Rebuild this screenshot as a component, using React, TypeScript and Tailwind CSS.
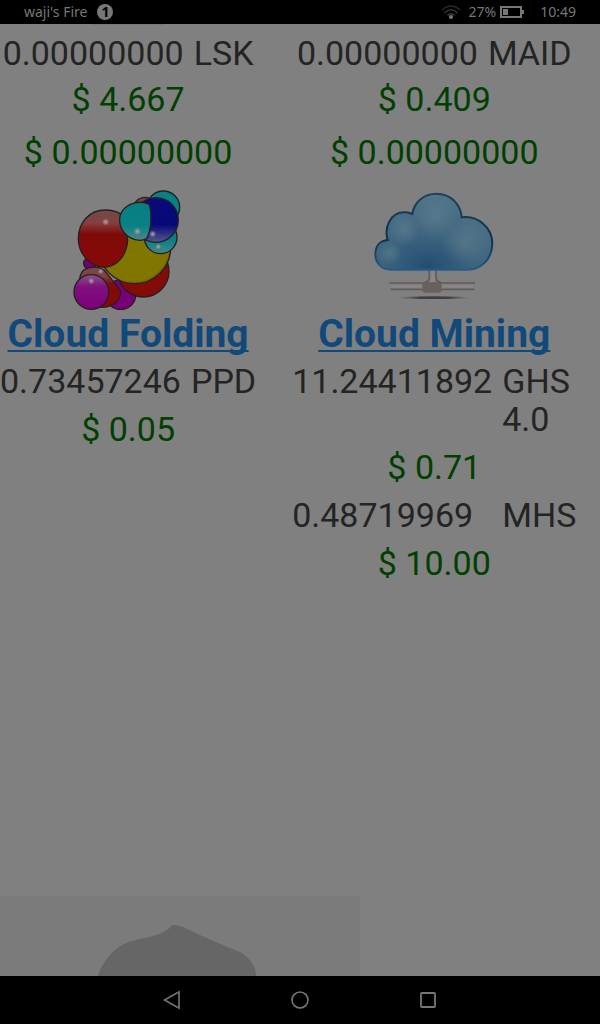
import { ReactNode } from "react";

type Holding = {
  amount: string;
  unit: string;
  price?: string;
};

type HoldingTableProps = { label: string; holdings: Holding[] };

function HoldingTable({ label, holdings }: HoldingTableProps) {
  return (
    <table aria-label={label} className="mx-auto border-collapse">
      {holdings.map((holding) => (
        <tbody key={holding.unit}>
          <tr className="align-top">
            <td className="py-[5px] pr-[10px]">{holding.amount}</td>
            <td className="py-[5px]">{holding.unit}</td>
          </tr>
          {holding.price ? (
            <tr>
              <td colSpan={2} className="py-[5px] text-center text-[#004000]">
                {holding.price}
              </td>
            </tr>
          ) : null}
        </tbody>
      ))}
    </table>
  );
}

function FoldingLogo() {
  return (
    <svg
      viewBox="42 30 384 360"
      className="mx-auto h-[120px] w-32"
      role="img"
      aria-label="Cloud Folding"
    >
      <defs>
        <linearGradient id="redTop" x1="0" y1="0" x2="0" y2="1">
          <stop offset="0" stopColor="#704a4a" />
          <stop offset="0.22" stopColor="#854040" />
          <stop offset="0.42" stopColor="#7e0b09" />
          <stop offset="1" stopColor="#880806" />
        </linearGradient>
        <linearGradient id="cyanBottom" x1="0" y1="0" x2="0" y2="1">
          <stop offset="0" stopColor="#087e82" />
          <stop offset="0.6" stopColor="#078186" />
          <stop offset="1" stopColor="#4b8588" />
        </linearGradient>
        <linearGradient id="blueBottom" x1="0" y1="0" x2="0" y2="1">
          <stop offset="0" stopColor="#080b78" />
          <stop offset="0.6" stopColor="#060878" />
          <stop offset="1" stopColor="#56568a" />
        </linearGradient>
        <linearGradient id="magentaTop" x1="0" y1="0" x2="0" y2="1">
          <stop offset="0" stopColor="#85568a" />
          <stop offset="0.35" stopColor="#80107f" />
          <stop offset="1" stopColor="#7d007c" />
        </linearGradient>
        <radialGradient id="yellowBall" cx="0.48" cy="0.48" r="0.54">
          <stop offset="0" stopColor="#807700" />
          <stop offset="0.9" stopColor="#807500" />
          <stop offset="1" stopColor="#5d5500" />
        </radialGradient>
        <radialGradient id="shine">
          <stop offset="0" stopColor="#b5a5a5" />
          <stop offset="1" stopColor="#b5a5a5" stopOpacity="0" />
        </radialGradient>
      </defs>
      <g stroke="#25201f" strokeWidth="4">
        <circle cx="120" cy="250" r="19" fill="#720070" />
        <circle cx="212" cy="344" r="45" fill="#790078" />
        <circle cx="280" cy="274" r="77" fill="#850b06" />
        <circle cx="285" cy="88" r="36" fill="#744242" />
        <circle cx="254" cy="203" r="108" fill="url(#yellowBall)" />
        <path
          d="M168 90C118 89 85 128 85 176C85 222 122 262 165 262C206 258 229 223 233 182L222 110C206 94 188 90 168 90Z"
          fill="url(#redTop)"
        />
        <circle cx="340" cy="82" r="49" fill="#078186" />
        <circle cx="332" cy="172" r="49" fill="url(#cyanBottom)" />
        <circle cx="318" cy="120" r="67" fill="url(#blueBottom)" />
        <path
          d="M298 73C269 59 232 70 216 94C200 121 212 155 239 172C256 182 276 183 290 176C305 147 306 103 298 73Z"
          fill="url(#cyanBottom)"
        />
        <path
          d="M101 270C120 258 148 259 163 271L212 332C215 360 188 382 155 382C115 378 86 348 88 306C89 290 93 278 101 270Z"
          fill="url(#redTop)"
        />
        <circle cx="124" cy="336" r="52" fill="url(#magentaTop)" />
      </g>
      <circle cx="167" cy="126" r="11" fill="url(#shine)" />
      <circle cx="262" cy="154" r="11" fill="url(#shine)" />
      <circle cx="308" cy="162" r="11" fill="url(#shine)" />
      <circle cx="325" cy="200" r="9" fill="url(#shine)" />
      <circle cx="152" cy="274" r="9" fill="url(#shine)" />
      <circle cx="124" cy="303" r="10" fill="url(#shine)" />
    </svg>
  );
}

function CloudLogo() {
  return (
    <svg
      viewBox="30 30 384 360"
      className="mx-auto h-[120px] w-32"
      role="img"
      aria-label="Cloud Mining"
    >
      <defs>
        <radialGradient id="cloudFill" cx="0.45" cy="0.95" r="0.9">
          <stop offset="0" stopColor="#244d73" />
          <stop offset="0.45" stopColor="#3d647f" />
          <stop offset="1" stopColor="#4d7488" />
        </radialGradient>
        <linearGradient id="cloudEdge" x1="0" y1="0" x2="0" y2="1">
          <stop offset="0" stopColor="#1f4259" />
          <stop offset="0.6" stopColor="#122e49" />
          <stop offset="1" stopColor="#2a5985" />
        </linearGradient>
        <radialGradient id="lobe">
          <stop offset="0" stopColor="#64808f" stopOpacity="0.6" />
          <stop offset="1" stopColor="#64808f" stopOpacity="0" />
        </radialGradient>
        <linearGradient id="shadow">
          <stop offset="0" stopColor="#404040" stopOpacity="0" />
          <stop offset="0.3" stopColor="#404040" />
          <stop offset="0.7" stopColor="#404040" />
          <stop offset="1" stopColor="#404040" stopOpacity="0" />
        </linearGradient>
      </defs>
      <path d="M208 270V292Q208 305 195 307M228 270V292Q228 305 243 307" fill="none" stroke="#625a58" strokeWidth="5" />
      <path d="M212 270H224V310H212Z" fill="#8b8583" />
      <path d="M88 309H345M92 328H343" stroke="#625b59" strokeWidth="5" />
      <path d="M94 319H341" stroke="#8b8785" strokeWidth="6" />
      <rect x="187" y="309" width="58" height="29" rx="7" fill="#69605e" />
      <ellipse cx="222" cy="353" rx="108" ry="4" fill="url(#shadow)" />
      <path
        d="M92 269C64 269 46 248 46 223C46 199 59 182 83 180C72 145 89 96 135 97C146 97 151 100 157 102C162 67 191 41 229 41C269 41 302 70 305 112C352 105 397 142 397 190C397 235 366 268 323 269Z"
        fill="url(#cloudFill)"
        stroke="url(#cloudEdge)"
        strokeWidth="6"
      />
      <circle cx="225" cy="110" r="66" fill="url(#lobe)" />
      <circle cx="318" cy="185" r="74" fill="url(#lobe)" />
      <circle cx="132" cy="150" r="46" fill="url(#lobe)" />
      <circle cx="90" cy="220" r="36" fill="url(#lobe)" />
    </svg>
  );
}

type CloudServiceProps = {
  name: string;
  logo: ReactNode;
  children: ReactNode;
};

function CloudService({ name, logo, children }: CloudServiceProps) {
  return (
    <section>
      {logo}
      <h2 className="mt-[3px] mb-[2px] text-center text-[39px] leading-[42px] font-bold whitespace-nowrap">
        <a
          href="#"
          className="text-[#11497b] underline decoration-2 underline-offset-3 [text-decoration-skip-ink:none]"
        >
          {name}
        </a>
      </h2>
      {children}
    </section>
  );
}

type CoinBalanceProps = { unit: string; rate: string; value: string };

function CoinBalance({ unit, rate, value }: CoinBalanceProps) {
  return (
    <section className="mb-[19px] text-center">
      <HoldingTable
        label={`${unit} balance`}
        holdings={[{ amount: "0.00000000", unit }]}
      />
      <p className="mt-[3px] text-[#004000]">{rate}</p>
      <p className="mt-[15px] text-[#004000]">{value}</p>
    </section>
  );
}

function StatusBar() {
  return (
    <header className="flex h-6 shrink-0 items-center bg-black px-6 font-['Noto_Sans',sans-serif] text-sm leading-6 text-[#777777]">
      <span>waji's Fire</span>
      <span className="ml-[10px] flex size-4 items-center justify-center rounded-full bg-[#777777] text-sm leading-4 font-bold text-black">
        1
      </span>
      <svg viewBox="0 0 20 16" className="ml-auto h-4 w-5" fill="none" strokeWidth="1.6">
        <path d="M1 6Q10 -2 19 6" stroke="#2a2a2a" />
        <path d="M3.500 9Q10 2.500 16.500 9" stroke="#303030" />
        <path d="M6.500 11.500Q10 8 13.500 11.500" stroke="#3c3c3c" />
        <circle cx="10" cy="13" r="2" fill="#777777" />
      </svg>
      <span className="ml-2">27%</span>
      <svg viewBox="0 0 24 12" className="ml-1 h-3 w-6">
        <rect x="1" y="1" width="20" height="10" fill="none" stroke="#777777" strokeWidth="2" />
        <path d="M22 4h2v4h-2zM3 3h5v6h-5z" fill="#777777" />
      </svg>
      <span className="ml-4">10:49</span>
    </header>
  );
}

function NavBar() {
  return (
    <nav className="flex h-12 shrink-0 items-center justify-center gap-[108px] bg-black">
      <button aria-label="Back">
        <svg viewBox="0 0 20 20" className="size-5" fill="none" stroke="#777777" strokeWidth="1.6">
          <path d="M17 1.800V18.200L2.500 10Z" />
        </svg>
      </button>
      <button aria-label="Home">
        <svg viewBox="0 0 20 20" className="size-5" fill="none" stroke="#777777" strokeWidth="1.6">
          <circle cx="10" cy="10" r="8" />
        </svg>
      </button>
      <button aria-label="Recent apps">
        <svg viewBox="0 0 20 20" className="size-5" fill="none" stroke="#777777" strokeWidth="1.8">
          <rect x="3" y="3" width="14" height="14" rx="1" />
        </svg>
      </button>
    </nav>
  );
}

export default function App() {
  return (
    <div className="flex min-h-screen flex-col bg-[#808080] font-[Roboto,sans-serif] text-[34px] leading-[38px] text-[#242424]">
      <StatusBar />
      <main className="flex flex-1 flex-col">
        <div className="grid grid-cols-[9fr_10fr] gap-x-9 pr-6">
          {/* bottom edge of the logo scrolled off above */}
          <div className="mx-auto mb-1 h-px w-[72px] bg-[#70797f]" />
          <div />
          <CoinBalance unit="LSK" rate="$ 4.667" value="$ 0.00000000" />
          <CoinBalance unit="MAID" rate="$ 0.409" value="$ 0.00000000" />
          <CloudService name="Cloud Folding" logo={<FoldingLogo />}>
            <HoldingTable
              label="Cloud Folding earnings"
              holdings={[{ amount: "0.73457246", unit: "PPD", price: "$ 0.05" }]}
            />
          </CloudService>
          <CloudService name="Cloud Mining" logo={<CloudLogo />}>
            <HoldingTable
              label="Cloud Mining earnings"
              holdings={[
                { amount: "11.24411892", unit: "GHS 4.0", price: "$ 0.71" },
                { amount: "0.48719969", unit: "MHS", price: "$ 10.00" },
              ]}
            />
          </CloudService>
        </div>
        <div className="mt-auto w-3/5 bg-[#7b7b7b]">
          <svg viewBox="0 48 1080 240" className="block w-full" role="img" aria-label="Profile">
            <path
              d="M293 288C310 240 345 200 385 187C430 172 490 170 516 136C530 132 560 145 600 165C650 188 690 204 720 216C750 232 768 260 768 288Z"
              fill="#666666"
            />
          </svg>
        </div>
      </main>
      <NavBar />
    </div>
  );
}
